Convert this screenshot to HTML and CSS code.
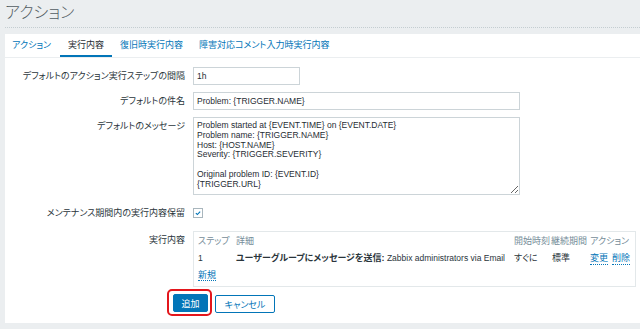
FILE: index.html
```html
<!DOCTYPE html>
<html lang="ja">
<head>
    <meta charset="UTF-8">
    <meta name="viewport" content="width=device-width, initial-scale=1.0">
    <title>アクション</title>
    <link rel="stylesheet" href="styles.css">
</head>
<body>
    <header class="page-header">
        <h1>アクション</h1>
    </header>

    <main class="panel">
        <nav class="tabs">
            <a href="#" class="tab">アクション</a>
            <a href="#" class="tab active">実行内容</a>
            <a href="#" class="tab">復旧時実行内容</a>
            <a href="#" class="tab">障害対応コメント入力時実行内容</a>
        </nav>

        <form class="action-form">
            <label class="form-label" for="escPeriod">デフォルトのアクション実行ステップの間隔</label>
            <div class="form-field"><input type="text" id="escPeriod" class="input input-short" value="1h"></div>

            <label class="form-label" for="defSubject">デフォルトの件名</label>
            <div class="form-field"><input type="text" id="defSubject" class="input input-wide" value="Problem: {TRIGGER.NAME}"></div>

            <label class="form-label label-top" for="defMessage">デフォルトのメッセージ</label>
            <div class="form-field"><textarea id="defMessage" class="input textarea">Problem started at {EVENT.TIME} on {EVENT.DATE}
Problem name: {TRIGGER.NAME}
Host: {HOST.NAME}
Severity: {TRIGGER.SEVERITY}

Original problem ID: {EVENT.ID}
{TRIGGER.URL}</textarea></div>

            <label class="form-label label-check">メンテナンス期間内の実行内容保留</label>
            <div class="form-field field-check">
                <span class="check-box">
                    <svg viewBox="0 0 10 10" width="10" height="10"><path d="M2.3 5.1 L4.2 6.9 L7.7 3.2" fill="none" stroke="#0275b8" stroke-width="1.4"/></svg>
                </span>
            </div>

            <label class="form-label label-top">実行内容</label>
            <div class="form-field">
                <div class="ops-box">
                    <div class="ops-row ops-head">
                        <span>ステップ</span>
                        <span>詳細</span>
                        <span>開始時刻</span>
                        <span>継続期間</span>
                        <span>アクション</span>
                    </div>
                    <div class="ops-row">
                        <span class="latin">1</span>
                        <span class="ops-detail"><b>ユーザーグループにメッセージを送信:</b><span class="latin"> Zabbix administrators via Email</span></span>
                        <span>すぐに</span>
                        <span class="ops-duration">標準</span>
                        <span class="ops-actions"><a href="#" class="link-action">変更</a><a href="#" class="link-action">削除</a></span>
                    </div>
                    <div class="ops-row">
                        <span><a href="#" class="link-action">新規</a></span>
                    </div>
                </div>
            </div>

            <div class="form-buttons">
                <span class="highlight"><button type="submit" class="btn btn-primary">追加</button></span>
                <button type="button" class="btn btn-alt">キャンセル</button>
            </div>
        </form>
    </main>
</body>
</html>
```

FILE: styles.css
```css
/* Basic styling */
* { box-sizing: border-box; margin: 0; padding: 0; }
body { font-family: "Liberation Sans", "Noto Sans CJK JP", sans-serif; font-size: 9px; line-height: 13px; color: #2a353b; background-color: #ebeef0; font-feature-settings: "palt"; overflow: hidden; }
a { color: #0275b8; text-decoration: none; }

.page-header { margin-left: 5px; padding: 3px 0 4px; border-bottom: 1px dotted #c4cdd1; }
h1 { font-size: 16px; line-height: 20px; font-weight: 300; color: #525c62; }

.panel { margin: 6px 0 0 5px; background-color: #fff; padding-bottom: 10px; }

/* tabs */
.tabs { display: flex; border-bottom: 1px solid #ebeef0; }
.tab { padding: 5px 8px 3px; border-bottom: 2px solid transparent; }
.tab:first-child { padding-left: 7px; padding-right: 9px; }
.tab.active { color: #1f2c33; border-bottom-color: #0275b8; }

/* form */
.action-form { display: grid; grid-template-columns: 180px 1fr; column-gap: 8px; row-gap: 7px; padding-top: 9px; }
.form-label { text-align: right; line-height: 18px; white-space: nowrap; }
.form-label.label-top { line-height: 13px; padding-top: 3px; }
.form-label.label-check { line-height: 22px; }
.form-field { display: flex; }
.field-check { height: 22px; align-items: center; }

.input { font-family: "Liberation Sans", sans-serif; font-size: 8.5px; color: #1f2c33; border: 1px solid #ccd4d8; background-color: #fff; padding: 0 3px; outline: none; }
.input-short { width: 107px; height: 18px; }
.input-wide { width: 327px; height: 18px; }
.textarea { width: 327px; height: 78px; padding: 3px; line-height: 9.8px; }

.check-box { display: flex; width: 10px; height: 10px; border: 1px solid #a9b6bd; }
.check-box svg { width: 8px; height: 8px; }

/* operations table */
.ops-box { width: 443px; border: 1px solid #e3e8ea; padding: 1px 4px 2px; }
.ops-row { display: grid; grid-template-columns: 38px 278px 37px 39px auto; height: 17px; align-items: center; white-space: nowrap; }
.ops-head { color: #768d99; }
.latin { font-size: 8.5px; }
.ops-detail b { font-weight: bold; }
.ops-duration { padding-left: 1px; }
.ops-actions { display: flex; gap: 4px; }
.link-action { border-bottom: 1px dotted #0275b8; line-height: 11px; }

/* buttons */
.form-buttons { grid-column: 1 / -1; display: flex; gap: 7px; padding-left: 168px; align-items: flex-start; }
.btn { font-family: "Liberation Sans", "Noto Sans CJK JP", sans-serif; font-size: 9px; font-feature-settings: "palt"; height: 18px; border: 1px solid #0275b8; border-radius: 2px; cursor: pointer; }
.btn-primary { width: 35px; color: #fff; background-color: #0275b8; }
.btn-alt { width: 60px; color: #0275b8; background-color: #fff; margin-top: 1px; }
.highlight { position: relative; display: flex; }
.highlight::after { content: ""; position: absolute; top: -5px; right: -4px; bottom: -4px; left: -6px; border: 2px solid #e3161c; border-radius: 5px; }
```
